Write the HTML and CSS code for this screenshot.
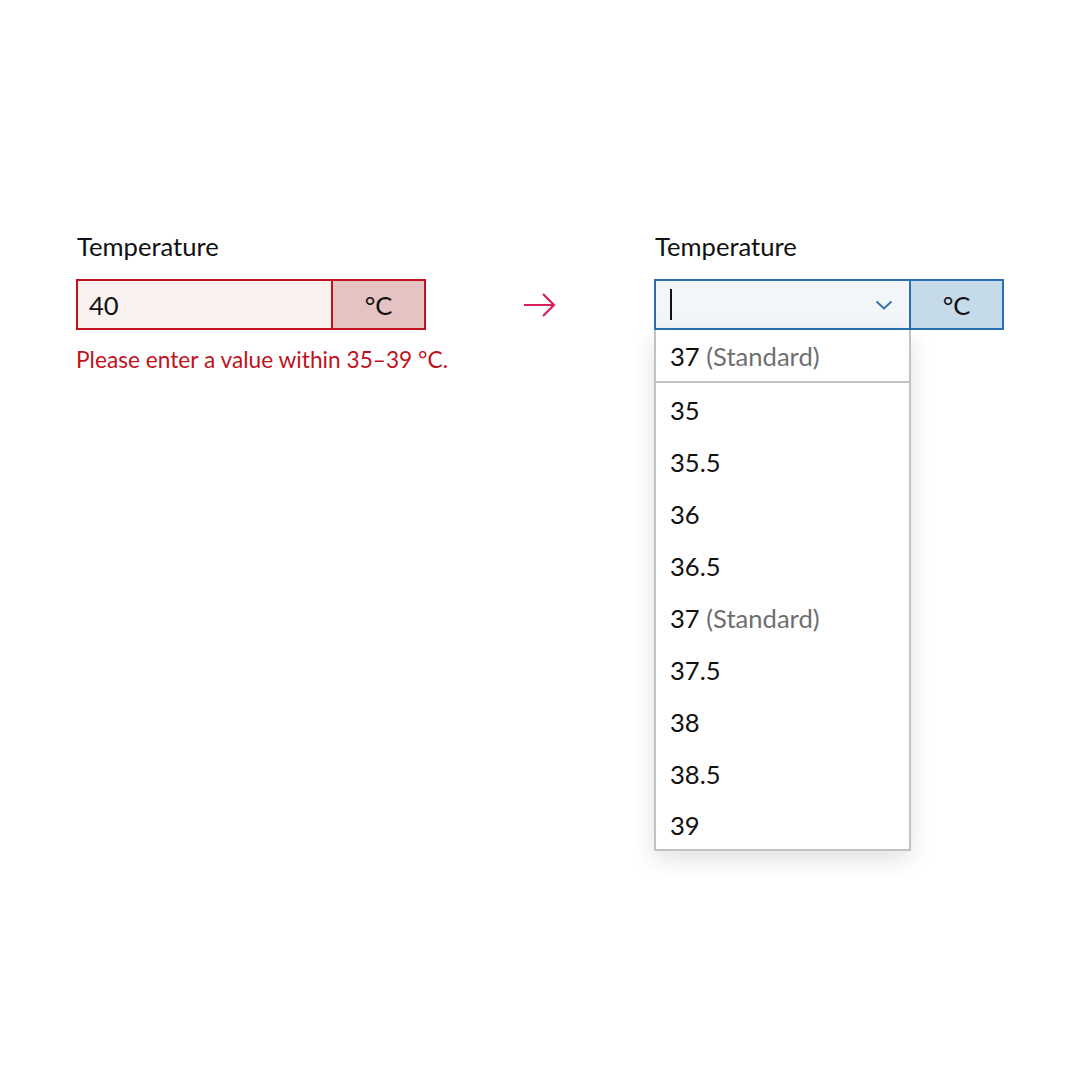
FILE: index.html
```html
<!DOCTYPE html>
<html lang="en">
<head>
<meta charset="utf-8">
<title>Temperature</title>
<link rel="stylesheet" href="styles.css">
</head>
<body>
<main class="stage">
  <section class="field">
    <div class="label">Temperature</div>
    <div class="control control--error">
      <div class="input">40</div>
      <div class="unit">°C</div>
    </div>
    <div class="error">Please enter a value within 35–39 °C.</div>
  </section>

  <div class="arrow">
    <svg width="34" height="28" viewBox="0 0 34 28" aria-hidden="true">
      <path d="M1 14 H31 M20 3 L31 14 L20 25" fill="none" stroke="#d81e5b" stroke-width="2.2"/>
    </svg>
  </div>

  <section class="field">
    <div class="label">Temperature</div>
    <div class="combo">
      <div class="control control--focus">
        <div class="input"><span class="caret"></span>
          <svg class="chevron" width="18" height="10" viewBox="0 0 18 10" aria-hidden="true">
            <path d="M1.5 1.5 L9 8.5 L16.5 1.5" fill="none" stroke="#2a6fb0" stroke-width="1.8"/>
          </svg>
        </div>
        <div class="unit">°C</div>
      </div>
      <ul class="menu">
        <li class="item item--top">37 <span class="muted">(Standard)</span></li>
        <li class="item">35</li>
        <li class="item">35.5</li>
        <li class="item">36</li>
        <li class="item">36.5</li>
        <li class="item">37 <span class="muted">(Standard)</span></li>
        <li class="item">37.5</li>
        <li class="item">38</li>
        <li class="item">38.5</li>
        <li class="item item--last">39</li>
      </ul>
    </div>
  </section>
</main>
</body>
</html>
```

FILE: styles.css
```css
* { box-sizing: border-box; }
html, body {
  margin: 0;
  background: #ffffff;
}
body {
  width: 1080px;
  height: 1080px;
  font-family: Lato, "Noto Sans", sans-serif;
  color: #111;
}
.stage {
  display: flex;
  align-items: flex-start;
  padding: 231px 0 0 76px;
}
.field {
  width: 350px;
  display: flex;
  flex-direction: column;
}
.label {
  font-size: 25.6px;
  line-height: 30px;
  padding-left: 1px;
  margin-bottom: 18px;
}
.control {
  display: flex;
  height: 51px;
  border: 2px solid;
}
.control .input {
  flex: 1;
  display: flex;
  align-items: center;
  padding-left: 11px;
  padding-right: 16px;
  font-size: 25.6px;
}
.control .unit {
  width: 93px;
  display: flex;
  align-items: center;
  justify-content: center;
  font-size: 25.6px;
  border-left: 2px solid;
}
.control--error { border-color: #c0121c; }
.control--error .input { background: #f9f1f0; }
.control--error .unit { background: #e6c3c3; border-left-color: #c0121c; }
.error {
  margin-top: 16px;
  color: #c0121c;
  font-size: 22.7px;
  line-height: 28px;
  white-space: nowrap;
}
.arrow {
  width: 228px;
  height: 51px;
  margin-top: 48px;
  display: flex;
  align-items: center;
  justify-content: center;
}
.combo { position: relative; }
.control--focus { border-color: #2a6fb0; }
.control--focus .input { background: #f2f6f9; justify-content: space-between; padding-left: 14px; }
.control--focus .unit { background: #c6dbea; border-left-color: #2a6fb0; }
.caret {
  display: block;
  width: 2px;
  height: 31px;
  background: #111;
}
.menu {
  position: absolute;
  left: 0;
  top: 51px;
  width: 257px;
  margin: 0;
  padding: 0;
  list-style: none;
  background: #fff;
  border: 2px solid #c2c2c2;
  border-top: none;
  box-shadow: 0 8px 22px rgba(0, 0, 0, 0.12);
}
.item {
  height: 52px;
  display: flex;
  align-items: center;
  padding-left: 14px;
  padding-top: 2px;
  font-size: 25.6px;
  white-space: pre;
}
.item--top {
  height: 53px;
  padding-top: 1px;
  border-bottom: 2px solid #c2c2c2;
}
.item--last { height: 50px; }
.muted { color: #6f6f6f; }
```
